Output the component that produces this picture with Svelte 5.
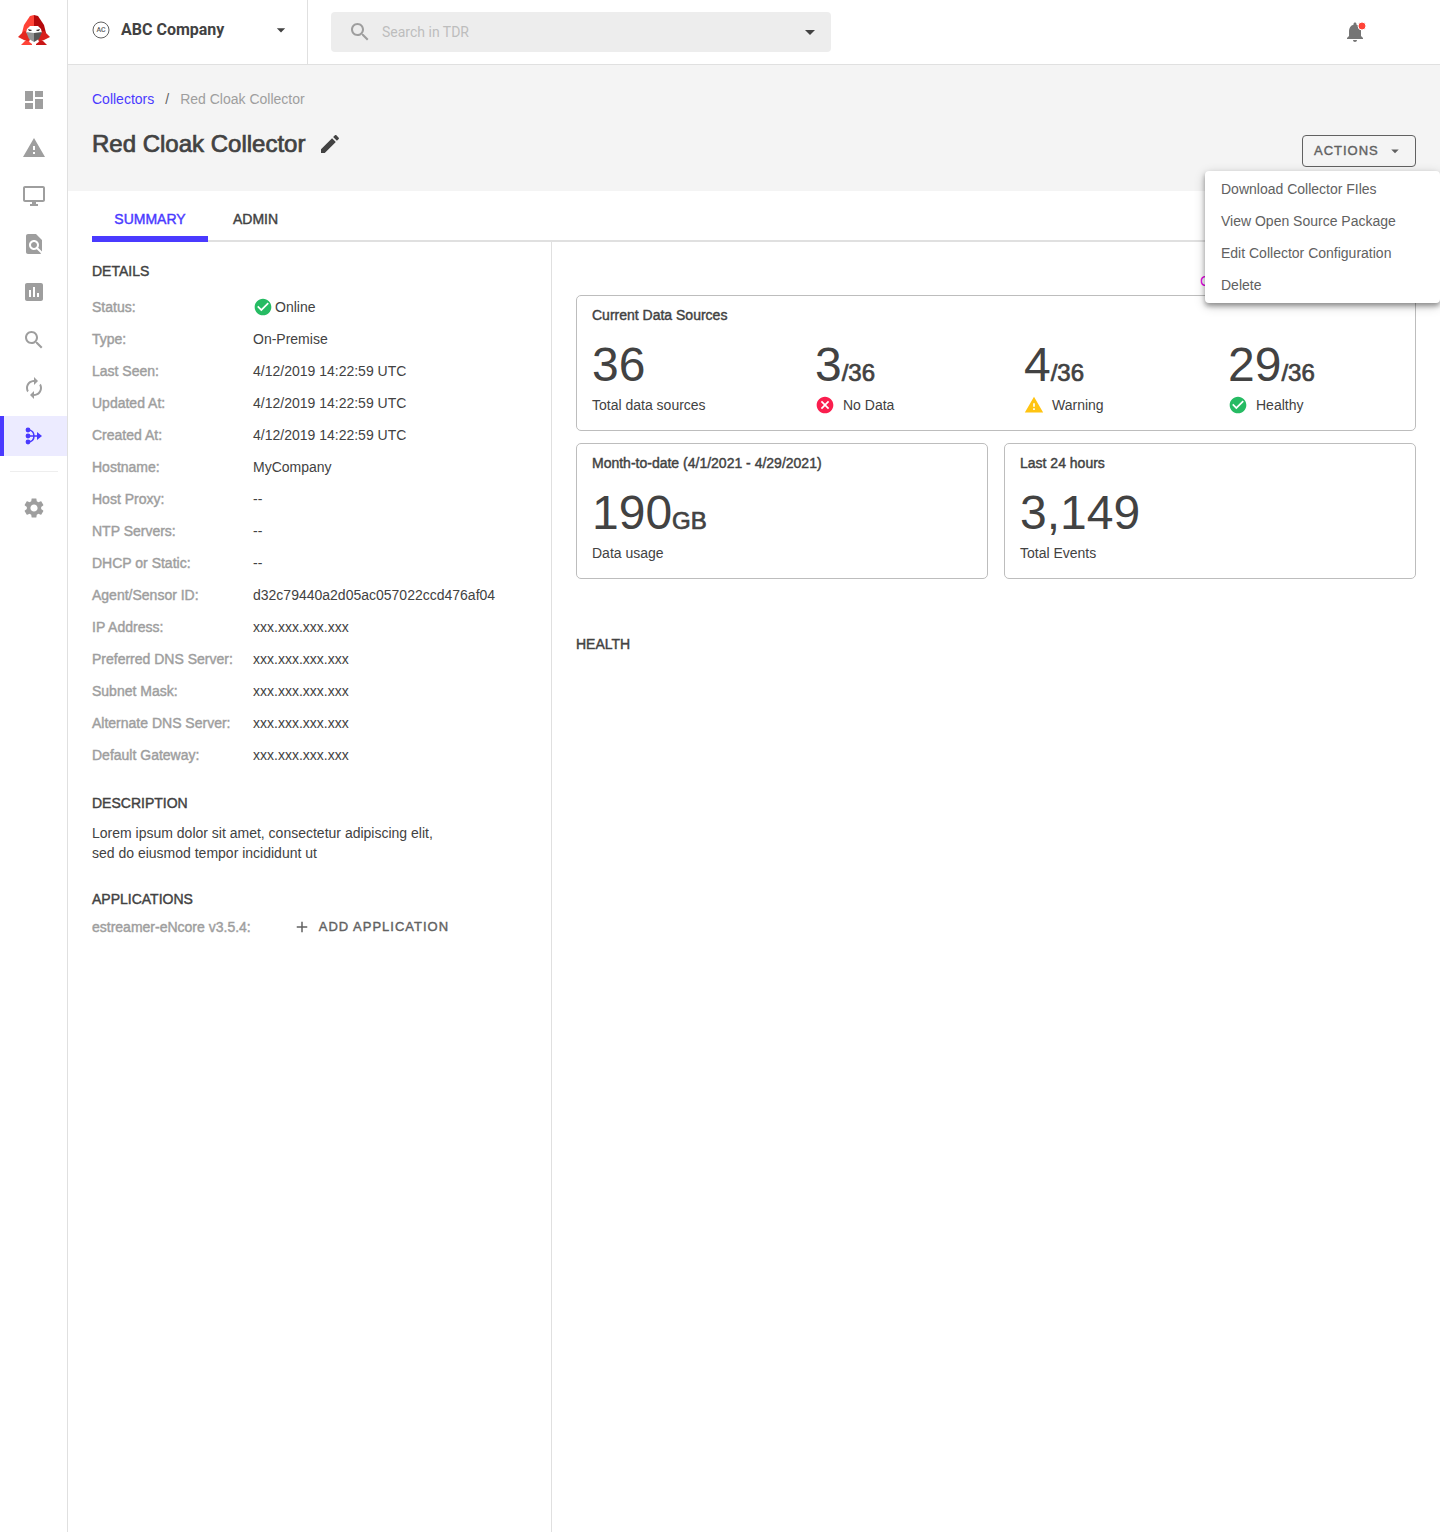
<script lang="ts">
	const icons = {
		dashboard: 'M3 13h8V3H3v10zm0 8h8v-6H3v6zm10 0h8V11h-8v10zm0-18v6h8V3h-8z',
		warning: 'M1 21h22L12 2 1 21zm12-3h-2v-2h2v2zm0-4h-2v-4h2v4z',
		desktop:
			'M21 2H3c-1.1 0-2 .9-2 2v12c0 1.1.9 2 2 2h7v2H8v2h8v-2h-2v-2h7c1.1 0 2-.9 2-2V4c0-1.1-.9-2-2-2zm0 14H3V4h18v12z',
		findInPage:
			'M20 19.59V8l-6-6H6c-1.1 0-1.99.9-1.99 2L4 20c0 1.1.89 2 1.99 2H18c.45 0 .85-.15 1.19-.4l-4.43-4.43c-.8.52-1.74.83-2.76.83-2.76 0-5-2.24-5-5s2.24-5 5-5 5 2.24 5 5c0 1.02-.31 1.96-.83 2.75L20 19.59zM9 13c0 1.66 1.34 3 3 3s3-1.34 3-3-1.34-3-3-3-3 1.34-3 3z',
		assessment:
			'M19 3H5c-1.1 0-2 .9-2 2v14c0 1.1.9 2 2 2h14c1.1 0 2-.9 2-2V5c0-1.1-.9-2-2-2zM9 17H7v-7h2v7zm4 0h-2V7h2v10zm4 0h-2v-4h2v4z',
		search:
			'M15.5 14h-.79l-.28-.27C15.41 12.59 16 11.11 16 9.5 16 5.91 13.09 3 9.5 3S3 5.91 3 9.5 5.91 16 9.5 16c1.61 0 3.09-.59 4.23-1.57l.27.28v.79l5 4.99L20.49 19l-4.99-5zm-6 0C7.01 14 5 11.99 5 9.5S7.01 5 9.5 5 14 7.01 14 9.5 11.99 14 9.5 14z',
		renew:
			'M12 6v3l4-4-4-4v3c-4.42 0-8 3.58-8 8 0 1.57.46 3.03 1.24 4.26L6.7 14.8c-.45-.83-.7-1.79-.7-2.8 0-3.31 2.69-6 6-6zm6.76 1.74L17.3 9.2c.44.84.7 1.79.7 2.8 0 3.31-2.69 6-6 6v-3l-4 4 4 4v-3c4.42 0 8-3.58 8-8 0-1.57-.46-3.03-1.24-4.26z',
		settings:
			'M19.14 12.94c.04-.3.06-.61.06-.94 0-.32-.02-.64-.07-.94l2.03-1.58c.18-.14.23-.41.12-.61l-1.92-3.32c-.12-.22-.37-.29-.59-.22l-2.39.96c-.5-.38-1.03-.7-1.62-.94l-.36-2.54c-.04-.24-.24-.41-.48-.41h-3.84c-.24 0-.43.17-.47.41l-.36 2.54c-.59.24-1.13.57-1.62.94l-2.39-.96c-.22-.08-.47 0-.59.22L2.74 8.87c-.12.21-.08.47.12.61l2.03 1.58c-.05.3-.09.63-.09.94s.02.64.07.94l-2.03 1.58c-.18.14-.23.41-.12.61l1.92 3.32c.12.22.37.29.59.22l2.39-.96c.5.38 1.03.7 1.62.94l.36 2.54c.05.24.24.41.48.41h3.84c.24 0 .44-.17.47-.41l.36-2.54c.59-.24 1.13-.56 1.62-.94l2.39.96c.22.08.47 0 .59-.22l1.92-3.32c.12-.22.07-.47-.12-.61l-2.01-1.58zM12 15.6c-1.98 0-3.6-1.62-3.6-3.6s1.62-3.6 3.6-3.6 3.6 1.62 3.6 3.6-1.62 3.6-3.6 3.6z',
		edit: 'M3 17.25V21h3.75L17.81 9.94l-3.75-3.75L3 17.25zM20.71 7.04c.39-.39.39-1.02 0-1.41l-2.34-2.34c-.39-.39-1.02-.39-1.41 0l-1.83 1.83 3.75 3.75 1.83-1.83z',
		arrow: 'M7 10l5 5 5-5z',
		add: 'M19 13h-6v6h-2v-6H5v-2h6V5h2v6h6v2z',
		check:
			'M12 2C6.48 2 2 6.48 2 12s4.48 10 10 10 10-4.48 10-10S17.52 2 12 2zm-2 15l-5-5 1.41-1.41L10 14.17l7.59-7.59L19 8l-9 9z',
		cancel:
			'M12 2C6.47 2 2 6.47 2 12s4.47 10 10 10 10-4.47 10-10S17.53 2 12 2zm5 13.59L15.59 17 12 13.41 8.41 17 7 15.59 10.59 12 7 8.41 8.41 7 12 10.59 15.59 7 17 8.41 13.41 12 17 15.59z'
	};

	const nav = [
		{ label: 'Dashboard', icon: icons.dashboard },
		{ label: 'Alerts', icon: icons.warning },
		{ label: 'Endpoints', icon: icons.desktop },
		{ label: 'Investigations', icon: icons.findInPage },
		{ label: 'Reports', icon: icons.assessment },
		{ label: 'Search', icon: icons.search },
		{ label: 'Playbooks', icon: icons.renew }
	];

	const details = [
		{ label: 'Status:', value: 'Online', online: true },
		{ label: 'Type:', value: 'On-Premise' },
		{ label: 'Last Seen:', value: '4/12/2019 14:22:59 UTC' },
		{ label: 'Updated At:', value: '4/12/2019 14:22:59 UTC' },
		{ label: 'Created At:', value: '4/12/2019 14:22:59 UTC' },
		{ label: 'Hostname:', value: 'MyCompany' },
		{ label: 'Host Proxy:', value: '--' },
		{ label: 'NTP Servers:', value: '--' },
		{ label: 'DHCP or Static:', value: '--' },
		{ label: 'Agent/Sensor ID:', value: 'd32c79440a2d05ac057022ccd476af04' },
		{ label: 'IP Address:', value: 'xxx.xxx.xxx.xxx' },
		{ label: 'Preferred DNS Server:', value: 'xxx.xxx.xxx.xxx' },
		{ label: 'Subnet Mask:', value: 'xxx.xxx.xxx.xxx' },
		{ label: 'Alternate DNS Server:', value: 'xxx.xxx.xxx.xxx' },
		{ label: 'Default Gateway:', value: 'xxx.xxx.xxx.xxx' }
	];

	const sources = [
		{ count: '36', total: '', label: 'Total data sources', icon: '', tone: '' },
		{ count: '3', total: '/36', label: 'No Data', icon: icons.cancel, tone: 'bad' },
		{ count: '4', total: '/36', label: 'Warning', icon: icons.warning, tone: 'warn' },
		{ count: '29', total: '/36', label: 'Healthy', icon: icons.check, tone: 'good' }
	];

	const actions = [
		'Download Collector FIles',
		'View Open Source Package',
		'Edit Collector Configuration',
		'Delete'
	];

	let menuOpen = $state(true);
	let query = $state('');
</script>

{#snippet icon(path: string, size = 24)}
	<svg width={size} height={size} viewBox="0 0 24 24" fill="currentColor" aria-hidden="true">
		<path d={path} />
	</svg>
{/snippet}

<div class="app">
	<aside class="sidebar">
		<a class="logo" href="/" aria-label="Home">
			<svg width="34" height="32" viewBox="0 0 34 32" aria-hidden="true">
				<path fill="#ff4337" d="M13 1l4-1v18H5l2-8z" />
				<path fill="#b5090b" d="M21 1l-4-1v18h12l-2-8z" />
				<path fill="#e5291f" d="M7 16l-6 6 6 3 5 2 3-9z" />
				<path fill="#d81f1c" d="M27 16l6 6-6 3-5 2-3-9z" />
				<path fill="#fff" d="M10 14l3-3h8l3 3 1 4H9z" />
				<path fill="#3e3333" d="M11 14l4 1-1 1h-2zM23 14l-4 1 1 1h2z" />
				<path fill="#969696" d="M9 17l8 1v9l-5-3z" />
				<path fill="#575757" d="M25 17l-8 1v9l5-3z" />
				<path fill="#ff4337" d="M8 26h3l4 3v1H4z" />
				<path fill="#c91515" d="M26 26h-3l-4 3v1h11z" />
			</svg>
		</a>
		<nav>
			{#each nav as item}
				<a class="nav-item" href="#{item.label.toLowerCase()}" aria-label={item.label}>
					{@render icon(item.icon)}
				</a>
			{/each}
			<a class="nav-item active" href="#collectors" aria-label="Collectors" aria-current="page">
				<svg width="24" height="24" viewBox="0 0 24 24" fill="none" stroke="currentColor" stroke-width="1.6" aria-hidden="true">
					<path d="M6 6c4 0 6 3 6 6s-2 6-6 6M6 12h11" />
					<g fill="currentColor" stroke="none">
						<path d="M15 8l5 4-5 4z" />
						<circle cx="6" cy="6" r="2.4" />
						<circle cx="6" cy="12" r="2.4" />
						<circle cx="6" cy="18" r="2.4" />
					</g>
				</svg>
			</a>
			<hr />
			<a class="nav-item" href="#settings" aria-label="Settings">{@render icon(icons.settings)}</a>
		</nav>
	</aside>

	<div class="main">
		<header class="topbar">
			<button type="button" class="company">
				<svg width="18" height="18" viewBox="0 0 18 18" aria-hidden="true">
					<circle cx="9" cy="9" r="8" fill="none" stroke="#616161" />
					<text x="9" y="11" text-anchor="middle">AC</text>
				</svg>
				<span>ABC Company</span>
				{@render icon(icons.arrow, 20)}
			</button>
			<div class="search">
				{@render icon(icons.search)}
				<input type="text" placeholder="Search in TDR" aria-label="Search in TDR" bind:value={query} />
				<button type="button" aria-label="Search options">{@render icon(icons.arrow)}</button>
			</div>
			<button type="button" class="bell" aria-label="Notifications">
				<svg width="24" height="24" viewBox="0 0 24 24" aria-hidden="true">
					<path fill="#757575" d="M12 22c1.1 0 2-.9 2-2h-4c0 1.1.9 2 2 2zm6-6v-5c0-3.07-1.64-5.64-4.5-6.32V4c0-.83-.67-1.5-1.5-1.5s-1.5.67-1.5 1.5v.68C7.63 5.36 6 7.92 6 11v5l-2 2v1h16v-1l-2-2z" />
					<circle cx="19" cy="6" r="4" fill="#ff4337" stroke="#fff" />
				</svg>
			</button>
		</header>

		<div class="page-head">
			<div>
				<div class="crumbs">
					<a href="#collectors">Collectors</a>
					<span class="slash">/</span>
					<span>Red Cloak Collector</span>
				</div>
				<h1 class="medium">
					Red Cloak Collector
					<button type="button" aria-label="Edit name">{@render icon(icons.edit)}</button>
				</h1>
			</div>
			<div class="actions">
				<button type="button" class="actions-btn medium" aria-expanded={menuOpen} onclick={() => (menuOpen = !menuOpen)}>
					ACTIONS {@render icon(icons.arrow, 18)}
				</button>
				{#if menuOpen}
					<div class="menu">
						{#each actions as action}
							<button type="button">{action}</button>
						{/each}
					</div>
				{/if}
			</div>
		</div>

		<div class="tabs medium">
			<button type="button" class="selected">SUMMARY</button>
			<button type="button">ADMIN</button>
		</div>

		<div class="columns">
			<section class="left">
				<h2 class="medium">DETAILS</h2>
				<dl>
					{#each details as row}
						<dt class="medium">{row.label}</dt>
						<dd>
							{#if row.online}<span class="good">{@render icon(icons.check, 20)}</span>{/if}
							{row.value}
						</dd>
					{/each}
				</dl>

				<h2 class="medium">DESCRIPTION</h2>
				<p class="description">
					Lorem ipsum dolor sit amet, consectetur adipiscing elit, sed do eiusmod tempor incididunt ut
				</p>

				<h2 class="medium">APPLICATIONS</h2>
				<div class="application">
					<span class="medium">estreamer-eNcore v3.5.4:</span>
					<button type="button" class="medium">{@render icon(icons.add, 18)} ADD APPLICATION</button>
				</div>
			</section>

			<section class="right">
				<a class="more" href="#c">C</a>
				<div class="card">
					<h3 class="medium">Current Data Sources</h3>
					<div class="sources">
						{#each sources as source}
							<div>
								<p class="number">{source.count}<span class="medium">{source.total}</span></p>
								<p class="caption">
									{#if source.icon}<span class={source.tone}>{@render icon(source.icon, 20)}</span>{/if}
									{source.label}
								</p>
							</div>
						{/each}
					</div>
				</div>
				<div class="pair">
					<div class="card">
						<h3 class="medium">Month-to-date (4/1/2021 - 4/29/2021)</h3>
						<p class="number">190<span class="medium">GB</span></p>
						<p class="caption">Data usage</p>
					</div>
					<div class="card">
						<h3 class="medium">Last 24 hours</h3>
						<p class="number">3,149</p>
						<p class="caption">Total Events</p>
					</div>
				</div>
				<h2 class="medium health">HEALTH</h2>
			</section>
		</div>
	</div>
</div>

<style>
	:global(body) {
		margin: 0;
		background: #fff;
	}
	.app {
		display: flex;
		min-height: 100vh;
		font-family: 'Liberation Sans', Arial, sans-serif;
		font-size: 14px;
		line-height: 20px;
		color: #424242;
	}
	.app * {
		box-sizing: border-box;
	}
	h1,
	h2,
	h3,
	p,
	dl,
	dd {
		margin: 0;
	}
	svg {
		display: block;
		flex: none;
	}
	button {
		border: 0;
		padding: 0;
		background: none;
		font: inherit;
		color: inherit;
		cursor: pointer;
	}
	a {
		color: inherit;
		text-decoration: none;
	}
	/* the family has no 500 weight, a thin outline stands in for it */
	.medium {
		font-weight: 400;
		-webkit-text-stroke: 0.03em currentColor;
	}
	.good {
		color: #26bb63;
	}
	.bad {
		color: #fa1e4e;
	}
	.warn {
		color: #ffc412;
	}

	.sidebar {
		flex: none;
		width: 68px;
		border-right: 1px solid #e0e0e0;
	}
	.logo {
		display: flex;
		justify-content: center;
		height: 80px;
		padding-top: 15px;
	}
	nav {
		display: flex;
		flex-direction: column;
		gap: 8px;
	}
	.nav-item {
		display: flex;
		align-items: center;
		justify-content: center;
		height: 40px;
		color: #9e9e9e;
		border-left: 4px solid transparent;
		padding-right: 4px;
	}
	.nav-item.active {
		color: #4a3aff;
		background: #ecebff;
		border-color: #4a3aff;
	}
	hr {
		width: 48px;
		margin: 7px auto 8px;
		border: 0;
		border-top: 1px solid #eee;
	}

	.main {
		flex: 1;
		min-width: 0;
		display: flex;
		flex-direction: column;
	}
	.topbar {
		display: flex;
		align-items: center;
		height: 65px;
		border-bottom: 1px solid #e0e0e0;
	}
	.company {
		display: flex;
		align-items: center;
		gap: 11px;
		width: 240px;
		height: 64px;
		padding: 0 16px 4px 24px;
		border-right: 1px solid #e0e0e0;
		font-family: Roboto, sans-serif;
		font-size: 16px;
		font-weight: 700;
		text-align: left;
	}
	.company text {
		font-size: 7px;
		font-weight: 500;
		fill: #616161;
	}
	.company span {
		flex: 1;
	}
	.search {
		display: flex;
		align-items: center;
		gap: 10px;
		width: 500px;
		height: 40px;
		margin-left: 23px;
		padding: 0 9px 0 17px;
		border-radius: 4px;
		background: #ededed;
		color: #9e9e9e;
	}
	.search input {
		flex: 1;
		min-width: 0;
		border: 0;
		padding: 0;
		outline: 0;
		background: none;
		font: 14px Roboto, sans-serif;
		color: #424242;
	}
	.search input::placeholder {
		color: #bdbdbd;
	}
	.search button {
		color: #424242;
	}
	.bell {
		margin-left: auto;
		margin-right: 73px;
	}

	.page-head {
		display: flex;
		justify-content: space-between;
		height: 126px;
		padding: 24px 24px 0;
		background: #f4f4f4;
	}
	.crumbs {
		display: flex;
		gap: 11px;
		color: #9e9e9e;
	}
	.crumbs a {
		color: #4a3aff;
	}
	.slash {
		color: #616161;
	}
	h1 {
		display: flex;
		align-items: center;
		gap: 13px;
		margin-top: 19px;
		font-size: 24px;
		line-height: 32px;
	}
	.actions {
		position: relative;
		margin-top: 46px;
	}
	.actions-btn {
		display: flex;
		align-items: center;
		justify-content: space-between;
		width: 114px;
		height: 32px;
		padding: 0 11px;
		border: 1px solid #616161;
		border-radius: 4px;
		color: #616161;
		font-size: 13px;
		letter-spacing: 1px;
	}
	.menu {
		position: absolute;
		z-index: 1;
		top: 36px;
		right: -24px;
		display: flex;
		flex-direction: column;
		width: 235px;
		padding: 2px 0;
		border-radius: 4px;
		background: #fff;
		box-shadow:
			0 3px 5px rgba(0, 0, 0, 0.35),
			0 3px 12px rgba(0, 0, 0, 0.2);
	}
	.menu button {
		height: 32px;
		padding: 0 16px;
		text-align: left;
		color: #616161;
	}

	.tabs {
		display: flex;
		gap: 5px;
		height: 51px;
		margin-left: 24px;
		border-bottom: 2px solid #e0e0e0;
	}
	.tabs button {
		height: 51px;
		padding: 11px 20px 0;
		border-bottom: 6px solid transparent;
	}
	.tabs .selected {
		width: 116px;
		color: #4a3aff;
		border-color: #4a3aff;
	}

	.columns {
		flex: 1;
		display: flex;
	}
	.left {
		flex: none;
		width: 484px;
		padding: 19px 24px;
		border-right: 1px solid #e0e0e0;
	}
	h2 {
		font-size: 14px;
		line-height: 20px;
	}
	dl {
		display: grid;
		grid-template-columns: 161px 1fr;
		grid-auto-rows: 32px;
		align-items: center;
		margin: 10px 0 22px;
	}
	dt {
		color: #9e9e9e;
	}
	dd {
		display: flex;
		align-items: center;
		gap: 2px;
	}
	.description {
		max-width: 365px;
		margin: 10px 0 26px;
	}
	.application {
		display: flex;
		align-items: center;
		gap: 42px;
		margin-top: 8px;
		color: #9e9e9e;
	}
	.application button {
		display: flex;
		align-items: center;
		gap: 8px;
		color: #616161;
		font-size: 13px;
		letter-spacing: 1px;
	}

	.right {
		flex: 1;
		min-width: 0;
		display: flex;
		flex-direction: column;
		gap: 12px;
		padding: 29px 24px;
	}
	.more {
		align-self: flex-end;
		width: 216px;
		height: 12px;
		color: #e400e4;
	}
	.card {
		padding: 9px 15px 15px;
		border: 1px solid #bdbdbd;
		border-radius: 5px;
	}
	h3 {
		font-size: 14px;
		line-height: 20px;
	}
	.sources {
		display: grid;
		grid-template-columns: 223fr 209fr 204fr 172fr;
	}
	.number {
		margin: 16px 0 6px;
		font-size: 48px;
		line-height: 48px;
	}
	.number span {
		font-size: 24px;
		line-height: 24px;
	}
	.caption {
		display: flex;
		align-items: center;
		gap: 8px;
	}
	.pair {
		display: grid;
		grid-template-columns: 1fr 1fr;
		gap: 16px;
	}
	.health {
		margin-top: 43px;
	}
</style>
